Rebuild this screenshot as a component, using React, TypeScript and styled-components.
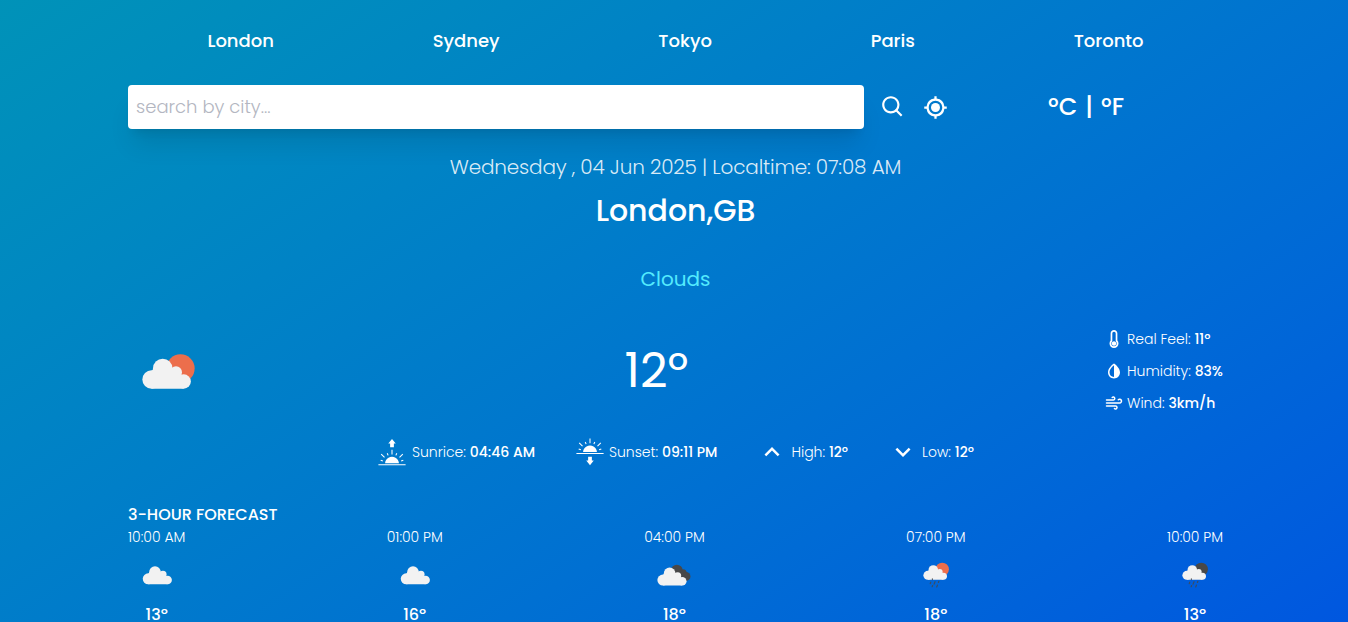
import React from "react";
import styled, { createGlobalStyle } from "styled-components";
import { BiSearch, BiCurrentLocation, BiSolidDropletHalf } from "react-icons/bi";
import { FiWind } from "react-icons/fi";
import { GiSunrise, GiSunset } from "react-icons/gi";
import { MdKeyboardArrowUp, MdKeyboardArrowDown } from "react-icons/md";
import { FaThermometerEmpty } from "react-icons/fa";

const Global = createGlobalStyle`
  *, *::before, *::after { box-sizing: border-box; }
  html, body { margin: 0; height: 622px; overflow: hidden; }
  body { font-family: Poppins, "Open Sans", sans-serif; color: #fff; }
  p, h1, h2 { margin: 0; font-weight: inherit; font-size: inherit; }
  svg { display: block; flex: none; }
`;

const Page = styled.main`
  width: 1351px;
  height: 894px;
  padding: 27px 128px 0;
  background: linear-gradient(to bottom right in oklab, oklch(60.9% 0.126 221.723), oklch(48.8% 0.243 264.376));
`;

const CityNav = styled.nav`
  display: flex;
  justify-content: space-around;
`;

const CityButton = styled.button`
  padding: 0;
  border: 0;
  background: none;
  color: inherit;
  font: 500 18px/28px Poppins, "Open Sans", sans-serif;
`;

const SearchRow = styled.div`
  display: flex;
  margin-top: 30px;
`;

const SearchArea = styled.div`
  display: flex;
  align-items: center;
  gap: 16px;
  width: 75%;
`;

const SearchInput = styled.input`
  flex: none;
  width: 736px;
  height: 44px;
  padding: 7px 8px 9px;
  border: 0;
  border-radius: 4px;
  background: #fff;
  font: 300 18px/28px Poppins, "Open Sans", sans-serif;
  box-shadow: 0 20px 25px -5px rgba(0, 0, 0, 0.1), 0 8px 10px -6px rgba(0, 0, 0, 0.1);
  &::placeholder {
    color: #b3b6c1;
    opacity: 1;
  }
`;

const Units = styled.div`
  display: flex;
  align-items: center;
  justify-content: center;
  gap: 8px;
  width: 25%;
  font-size: 24px;
  line-height: 32px;
  font-weight: 500;
`;

const DateLine = styled.p`
  margin-top: 24px;
  text-align: center;
  font-size: 20px;
  line-height: 28px;
  font-weight: 300;
  letter-spacing: -0.18px;
  color: rgba(255, 255, 255, 0.86);
`;

const CityName = styled.h1`
  margin-top: 12px;
  text-align: center;
  font-size: 30px;
  line-height: 36px;
  font-weight: 500;
`;

const Condition = styled.p`
  margin-top: 36px;
  text-align: center;
  font-size: 20px;
  line-height: 28px;
  color: #53eafd;
`;

const Current = styled.section`
  display: flex;
  align-items: center;
  justify-content: space-between;
  height: 96px;
  margin-top: 30px;
`;

const Temperature = styled.p`
  font-size: 48px;
  line-height: 48px;
`;

const Details = styled.div`
  display: flex;
  flex-direction: column;
  gap: 12px;
`;

const Detail = styled.div<{ $gap?: number }>`
  display: flex;
  align-items: center;
  gap: ${(p) => p.$gap ?? 4}px;
  font-size: 14px;
  line-height: 20px;
  font-weight: 300;
  white-space: pre;
`;

const Value = styled.span`
  font-weight: 500;
`;

const SunRow = styled.section`
  display: flex;
  justify-content: center;
  gap: 40px;
  margin-top: 18px;
`;

const ForecastTitle = styled.h2`
  margin-top: 36px;
  font-size: 16px;
  line-height: 24px;
  font-weight: 500;
  text-transform: uppercase;
`;

const Forecast = styled.section`
  display: flex;
  justify-content: space-between;
`;

const Slot = styled.div`
  display: flex;
  flex-direction: column;
  align-items: center;
  gap: 4px;
`;

const SlotTime = styled.p`
  font-size: 14px;
  line-height: 20px;
  font-weight: 300;
`;

const SlotTemp = styled.p`
  font-size: 16px;
  line-height: 24px;
  font-weight: 500;
`;

type Weather = "fewClouds" | "cloud" | "broken" | "rainDay" | "rainNight";

const Cloud = ({ transform }: { transform?: string }) => (
  <g fill="#f2f2f2" transform={transform}>
    <circle cx="43.4" cy="46.8" r="12.2" />
    <circle cx="29.4" cy="60.6" r="11.5" />
    <circle cx="60" cy="51.6" r="7.5" />
    <circle cx="69.6" cy="63.1" r="9" />
    <path d="M29.4 50 L33 46 H55 L66 52 L69.6 72.1 H29.4 Z" />
  </g>
);

const Rain = () => (
  <path
    d="M42.5 58v1.5M39 65l-1 3M48 64l-2 5M56 63l-1 2.5M43 72l-1 2.5M53 71l-1.5 4"
    stroke="#484848"
    strokeOpacity="0.85"
    strokeWidth="2.4"
    strokeLinecap="round"
    fill="none"
  />
);

const WeatherIcon = ({ type, size }: { type: Weather; size: number }) => (
  <svg width={size} height={size} viewBox="0 0 100 100">
    {type === "fewClouds" && (
      <>
        <circle cx="65.6" cy="46.8" r="17.7" fill="#ec6e4c" />
        <Cloud />
      </>
    )}
    {type === "cloud" && <Cloud transform="translate(2.4 -2.7)" />}
    {type === "broken" && (
      <>
        <g fill="#484848">
          <circle cx="56" cy="40.5" r="12" />
          <circle cx="68.5" cy="46" r="8" />
          <circle cx="75" cy="53" r="9.3" />
          <path d="M50 50L68 40L75 62H55Z" />
        </g>
        <Cloud transform="translate(-2.5 0)" />
      </>
    )}
    {(type === "rainDay" || type === "rainNight") && (
      <>
        <circle cx="63" cy="38.2" r="13.9" fill={type === "rainDay" ? "#ec6e4c" : "#484848"} />
        <Cloud transform="translate(9.2 1.6) scale(0.81)" />
        <Rain />
      </>
    )}
  </svg>
);

const cities = ["London", "Sydney", "Tokyo", "Paris", "Toronto"];

const details = [
  { icon: <FaThermometerEmpty size={18} />, label: "Real Feel: ", value: "11º" },
  { icon: <BiSolidDropletHalf size={18} />, label: "Humidity: ", value: "83%" },
  { icon: <FiWind size={18} />, label: "Wind: ", value: "3km/h" },
];

const sun = [
  { icon: <GiSunrise size={30} />, label: "Sunrice: ", value: "04:46 AM", gap: 5 },
  { icon: <GiSunset size={30} />, label: "Sunset: ", value: "09:11 PM" },
  { icon: <MdKeyboardArrowUp size={30} />, label: "High: ", value: "12º" },
  { icon: <MdKeyboardArrowDown size={30} />, label: "Low: ", value: "12º" },
];

const forecast: { time: string; type: Weather; temp: string }[] = [
  { time: "10:00 AM", type: "cloud", temp: "13º" },
  { time: "01:00 PM", type: "cloud", temp: "16º" },
  { time: "04:00 PM", type: "broken", temp: "18º" },
  { time: "07:00 PM", type: "rainDay", temp: "18º" },
  { time: "10:00 PM", type: "rainNight", temp: "13º" },
];

export default function App() {
  return (
    <Page>
      <Global />
      <CityNav>
        {cities.map((city) => (
          <CityButton key={city}>{city}</CityButton>
        ))}
      </CityNav>
      <SearchRow>
        <SearchArea>
          <SearchInput placeholder="search by city..." />
          <BiSearch size={26} />
          <BiCurrentLocation size={27} />
        </SearchArea>
        <Units>
          <span>ºC</span>
          <span>|</span>
          <span>ºF</span>
        </Units>
      </SearchRow>
      <DateLine>Wednesday , 04 Jun 2025 | Localtime: 07:08 AM</DateLine>
      <CityName>London,GB</CityName>
      <Condition>Clouds</Condition>
      <Current>
        <WeatherIcon type="fewClouds" size={80} />
        <Temperature>12º</Temperature>
        <Details>
          {details.map((d) => (
            <Detail key={d.label}>
              {d.icon}
              <span>
                {d.label}
                <Value>{d.value}</Value>
              </span>
            </Detail>
          ))}
        </Details>
      </Current>
      <SunRow>
        {sun.map((s) => (
          <Detail key={s.label} $gap={s.gap}>
            {s.icon}
            <span>
              {s.label}
              <Value>{s.value}</Value>
            </span>
          </Detail>
        ))}
      </SunRow>
      <ForecastTitle>3-hour forecast</ForecastTitle>
      <Forecast>
        {forecast.map((f) => (
          <Slot key={f.time}>
            <SlotTime>{f.time}</SlotTime>
            <WeatherIcon type={f.type} size={48} />
            <SlotTemp>{f.temp}</SlotTemp>
          </Slot>
        ))}
      </Forecast>
    </Page>
  );
}
